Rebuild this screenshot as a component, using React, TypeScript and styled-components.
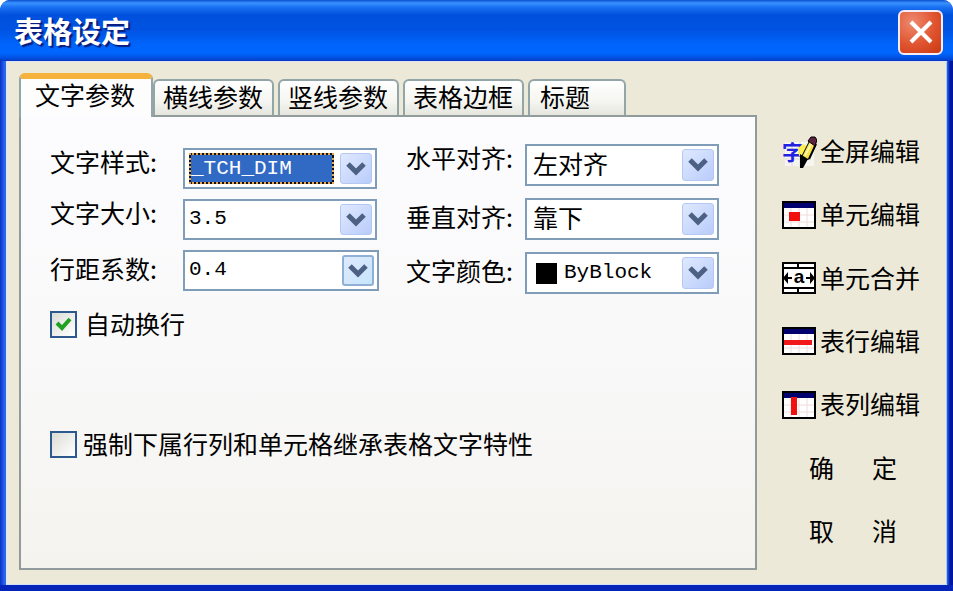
import React, { useRef, useState } from "react";
import styled, { createGlobalStyle, css } from "styled-components";

const Global = createGlobalStyle`
  * { box-sizing: border-box; }
  body { margin: 0; background: #fff; }
  button, select, input { font: inherit; color: inherit; margin: 0; }
`;

const sans = `"Noto Sans CJK SC", "Liberation Sans", sans-serif`;
const mono = `"Liberation Mono", "Noto Sans CJK SC", monospace`;

const Dialog = styled.div`
  display: flex;
  flex-direction: column;
  min-height: 100vh;
  overflow: hidden;
  border-radius: 10px 10px 0 0;
  background: #0a3fd6;
  color: #000;
  font: 25px/30px ${sans};
`;

const TitleBar = styled.header`
  display: flex;
  align-items: center;
  justify-content: space-between;
  height: 61px;
  padding: 3px 10px 0 14px;
  background: linear-gradient(
    #0a4fd0 0,
    #3b93ff 3px,
    #1c72f2 7px,
    #0050dc 15px,
    #0053e2 30px,
    #0064fb 44px,
    #0066ff 53px,
    #0050e0 58px,
    #0a37c0 61px
  );
`;

const Title = styled.h1`
  margin: 0;
  padding-bottom: 4px;
  color: #fff;
  font-size: 29px;
  line-height: 36px;
  font-weight: 700;
  text-shadow: 2px 2px 1px #0a1d7c;
`;

const CloseButton = styled.button`
  display: grid;
  place-items: center;
  width: 45px;
  height: 45px;
  padding: 0;
  border: 2px solid #f4ecf6;
  border-radius: 6px;
  background: radial-gradient(circle at 30% 25%, #ee8a70, #e0532f 55%, #c63a12);
`;

const Frame = styled.div`
  flex: 1;
  display: flex;
  padding: 0 6px 6px;
  background: linear-gradient(90deg, #0a2fc8 0, #2a6cf0 5px, #2a6cf0 20px, #2a6cf0 calc(100% - 6px), #0016a0 calc(100% - 3px));
  box-shadow: inset 0 -6px 0 #0524b8;
`;

const Body = styled.main`
  flex: 1;
  display: flex;
  padding: 12px 27px 15px 13px;
  background: #ece9d8;
  box-shadow: inset 0 1px 0 #dde3f4, inset 0 -1px 0 #cfe0f8, inset 1px 0 0 #dde6f6, inset -1px 0 0 #a9c6f6;
`;

const Tabs = styled.section`
  flex: 1;
  display: flex;
  flex-direction: column;
`;

const TabList = styled.div`
  display: flex;
  align-items: flex-end;
  gap: 4px;
  height: 42px;
  padding-right: 16px;
`;

const Tab = styled.button<{ $active?: boolean; $short?: boolean }>`
  height: 36px;
  padding: ${(p) => (p.$short ? "0 34px 4px 10px" : "0 9px 4px 8px")};
  border: 2px solid #93a5a6;
  border-bottom: 0;
  border-radius: 6px 6px 0 0;
  background: linear-gradient(#fff, #f5f5f1 60%, #e6e6df);
  line-height: 30px;
  white-space: nowrap;
  ${(p) =>
    p.$active &&
    css`
      position: relative;
      z-index: 1;
      height: 44px;
      margin: 0 -4px -2px 0;
      padding: 0 16px 10px 14px;
      border-top: 6px solid #f5b23c;
      background: #fdfdfe;
    `}
`;

const Panel = styled.div`
  flex: 1;
  padding: 27px 36px 32px 29px;
  border: 2px solid #919b9c;
  background: linear-gradient(#fcfcfe, #f9f9fa 50%, #f4f3ee);
`;

const Fields = styled.div`
  display: flex;
  justify-content: space-between;
  align-items: flex-start;
`;

const Column = styled.div<{ $lower?: boolean }>`
  display: grid;
  grid-auto-rows: ${(p) => (p.$lower ? 41 : 42)}px;
  gap: ${(p) => (p.$lower ? 10 : 12)}px;
  padding-top: ${(p) => (p.$lower ? 4 : 0)}px;
`;

const Field = styled.div<{ $center?: boolean; $labelWidth: number; $wide?: boolean }>`
  display: grid;
  grid-template-columns: ${(p) => p.$labelWidth}px ${(p) => (p.$wide ? 196 : 194)}px;
  align-items: ${(p) => (p.$center ? "center" : "start")};
`;

const FieldLabel = styled.label`
  padding-bottom: 6px;
  line-height: 26px;
  white-space: nowrap;
`;

const Shell = styled.div`
  display: flex;
  align-items: center;
  align-self: stretch;
  padding: 3px 3px 3px 4px;
  border: 2px solid #7f9db9;
  background: #fff;
`;

const Swatch = styled.span`
  width: 21px;
  height: 21px;
  margin: 0 7px 0 5px;
  background: #000;
`;

const Choice = styled.select<{ $selected?: boolean; $latin?: boolean; $indent?: boolean }>`
  flex: 1;
  min-width: 0;
  height: 31px;
  padding: ${(p) => (p.$indent ? "0 0 5px 2px" : "0 0 1px")};
  border: 0;
  appearance: none;
  background: transparent;
  font-family: ${(p) => (p.$latin ? mono : sans)};
  font-size: ${(p) => (p.$latin ? 21 : 25)}px;
  line-height: 26px;
  outline: none;
  ${(p) =>
    p.$selected &&
    css`
      margin-right: 6px;
      padding: 0;
      border: 2px dotted #e9a54c;
      background: linear-gradient(#316ac5, #316ac5) padding-box, linear-gradient(#10131c, #10131c) border-box;
      color: #fff;
    `}
`;

const DropButton = styled.button<{ $framed?: boolean }>`
  display: grid;
  place-items: center;
  width: 32px;
  align-self: stretch;
  padding: 0;
  border: ${(p) => (p.$framed ? "2px solid #8fb0d4" : "1px solid #b5c7f3")};
  border-radius: 3px;
  background: linear-gradient(135deg, #dfe9ff, ${(p) => (p.$framed ? "#c6e6fb" : "#b9ccfa")});
`;

const CheckRow = styled.label<{ $gap: number; $top: number }>`
  display: flex;
  align-items: center;
  gap: ${(p) => p.$gap}px;
  margin-top: ${(p) => p.$top}px;
  white-space: nowrap;
`;

const CheckText = styled.span`
  padding-bottom: 3px;
  line-height: 28px;
`;

const CheckBox = styled.span`
  display: grid;
  width: 27px;
  height: 27px;
  > * { grid-area: 1 / 1; }
  svg { place-self: center; pointer-events: none; visibility: hidden; }
  input:checked + svg { visibility: visible; }
`;

const CheckInput = styled.input`
  appearance: none;
  width: 27px;
  height: 27px;
  border: 2px solid #2c5a8e;
  background: linear-gradient(135deg, #dcdcd6, #fff);
`;

const Actions = styled.aside`
  display: grid;
  grid-template-rows: repeat(7, 1fr);
  width: 138px;
  margin-left: 25px;
  padding: 47px 0 6px;
`;

const Action = styled.button`
  display: flex;
  align-items: center;
  gap: 3px;
  padding: 0;
  border: 0;
  background: none;
  white-space: nowrap;
`;

const ActionText = styled.span`
  padding-bottom: 4px;
`;

const PlainAction = styled(Action)`
  gap: 38px;
  padding-left: 27px;
`;

const FullIcon = () => (
  <svg width="35" height="34" viewBox="0 0 35 34" aria-hidden="true">
    <path d="M3 7h29v24H3z" fill="#f7f5f0" />
    <path d="M10 31V7M18 31V7M3 24h26" stroke="#d9d6e2" fill="none" />
    <text x="0" y="25" fontSize="21" fontWeight="700" fill="#2222e0" fontFamily="Noto Sans CJK SC, sans-serif">字</text>
    <path d="M16 13l5-4 4 2-5 9-3 1z" fill="#ffee52" />
    <path d="M20 21L28 5l6 4-7 15-5 1z" fill="#f8e04a" stroke="#000" strokeWidth="1" />
    <path d="M23 21l7-14" stroke="#fff7a8" strokeWidth="2" />
    <path d="M34 9l-7 15" stroke="#000" strokeWidth="2" />
    <path d="M26 6l3-4h4l2 3-2 6z" fill="#5c2340" stroke="#000" />
    <path d="M18 19l8 5-5 9h-3z" fill="#000" />
  </svg>
);

const TableIcon = ({ kind }: { kind: "cell" | "row" | "column" }) => (
  <svg width="35" height="29" viewBox="0 0 35 29" aria-hidden="true">
    <path d="M1 1h32v26H1z" fill="#fff" />
    <path d="M9 7v20M17 7v20M25 7v20M2 14h31M2 21h31" stroke="#f0dcdc" strokeWidth="1" />
    <path d="M1 1h32v6H1z" fill="#00006e" />
    {kind === "cell" && <path d="M7 11h11v9H7z" fill="#f01010" />}
    {kind === "row" && <path d="M2 13h28v5H2z" fill="#f01818" />}
    {kind === "column" && <path d="M9 6h6v18H9z" fill="#f01010" />}
    <path d="M1 1h32v26H1z" fill="none" stroke="#000" strokeWidth="2" />
  </svg>
);

const MergeIcon = () => (
  <svg width="35" height="33" viewBox="0 0 35 33" aria-hidden="true">
    <path d="M1 1h32v30H1z" fill="#fff" stroke="#000" strokeWidth="2" />
    <path d="M1 6h32M1 26h32M16 1v5M16 26v5" stroke="#000" strokeWidth="2" fill="none" />
    <path d="M1 16l5-6v5h4v2H6v5zM33 16l-5-6v5h-4v2h4v5z" fill="#000" />
    <text x="17" y="21" textAnchor="middle" fontSize="19" fontWeight="700" fontFamily="Liberation Sans, sans-serif">a</text>
  </svg>
);

type PickerProps = {
  id: string;
  label: string;
  options: string[];
  labelWidth: number;
  center?: boolean;
  selected?: boolean;
  latin?: boolean;
  framed?: boolean;
  swatch?: boolean;
};

function Picker({ id, label, options, labelWidth, center, selected, latin, framed, swatch }: PickerProps) {
  const ref = useRef<HTMLSelectElement>(null);
  return (
    <Field $center={center} $labelWidth={labelWidth} $wide={framed}>
      <FieldLabel htmlFor={id}>{label}:</FieldLabel>
      <Shell>
        {swatch && <Swatch />}
        <Choice ref={ref} id={id} $selected={selected} $latin={latin} $indent={!latin}>
          {options.map((o) => (
            <option key={o}>{o}</option>
          ))}
        </Choice>
        <DropButton type="button" tabIndex={-1} $framed={framed} aria-label={`展开${label}`} onClick={() => ref.current?.showPicker()}>
          <svg width="20" height="14" viewBox="0 0 20 14" aria-hidden="true">
            <path d="M2 2l8 8 8-8" fill="none" stroke="#4d6185" strokeWidth="5" />
          </svg>
        </DropButton>
      </Shell>
    </Field>
  );
}

const tabs = ["文字参数", "横线参数", "竖线参数", "表格边框", "标题"];

export default function App() {
  const [wrap, setWrap] = useState(true);
  const [inherit, setInherit] = useState(false);
  const tick = (
    <svg width="17" height="17" viewBox="0 0 17 17" aria-hidden="true">
      <path d="M2 7l5 5 8-9" fill="none" stroke="#21a121" strokeWidth="4" />
    </svg>
  );
  return (
    <>
      <Global />
      <Dialog role="dialog" aria-labelledby="title">
        <TitleBar>
          <Title id="title">表格设定</Title>
          <CloseButton type="button" aria-label="关闭">
            <svg width="26" height="26" viewBox="0 0 26 26" aria-hidden="true">
              <path d="M3 3l20 20M23 3L3 23" stroke="#fff" strokeWidth="4" />
            </svg>
          </CloseButton>
        </TitleBar>
        <Frame>
          <Body>
            <Tabs>
              <TabList role="tablist">
                {tabs.map((t, i) => (
                  <Tab key={t} type="button" role="tab" aria-selected={i === 0} $active={i === 0} $short={t.length < 4}>
                    {t}
                  </Tab>
                ))}
              </TabList>
              <Panel role="tabpanel">
                <Fields>
                  <Column $lower>
                    <Picker id="style" label="文字样式" labelWidth={133} options={["_TCH_DIM"]} selected latin />
                    <Picker id="size" label="文字大小" labelWidth={133} options={["3.5"]} latin />
                    <Picker id="spacing" label="行距系数" labelWidth={133} options={["0.4"]} latin center framed />
                  </Column>
                  <Column>
                    <Picker id="halign" label="水平对齐" labelWidth={119} options={["左对齐"]} />
                    <Picker id="valign" label="垂直对齐" labelWidth={119} options={["靠下"]} center />
                    <Picker id="color" label="文字颜色" labelWidth={119} options={["ByBlock"]} latin swatch center />
                  </Column>
                </Fields>
                <CheckRow $gap={8} $top={15}>
                  <CheckBox>
                    <CheckInput type="checkbox" checked={wrap} onChange={(e) => setWrap(e.target.checked)} />
                    {tick}
                  </CheckBox>
                  <CheckText>自动换行</CheckText>
                </CheckRow>
                <CheckRow $gap={6} $top={89}>
                  <CheckBox>
                    <CheckInput type="checkbox" checked={inherit} onChange={(e) => setInherit(e.target.checked)} />
                    {tick}
                  </CheckBox>
                  <CheckText>强制下属行列和单元格继承表格文字特性</CheckText>
                </CheckRow>
              </Panel>
            </Tabs>
            <Actions>
              <Action type="button"><FullIcon /><ActionText>全屏编辑</ActionText></Action>
              <Action type="button"><TableIcon kind="cell" /><ActionText>单元编辑</ActionText></Action>
              <Action type="button"><MergeIcon /><ActionText>单元合并</ActionText></Action>
              <Action type="button"><TableIcon kind="row" /><ActionText>表行编辑</ActionText></Action>
              <Action type="button"><TableIcon kind="column" /><ActionText>表列编辑</ActionText></Action>
              <PlainAction type="button"><ActionText>确</ActionText><ActionText>定</ActionText></PlainAction>
              <PlainAction type="button"><ActionText>取</ActionText><ActionText>消</ActionText></PlainAction>
            </Actions>
          </Body>
        </Frame>
      </Dialog>
    </>
  );
}
